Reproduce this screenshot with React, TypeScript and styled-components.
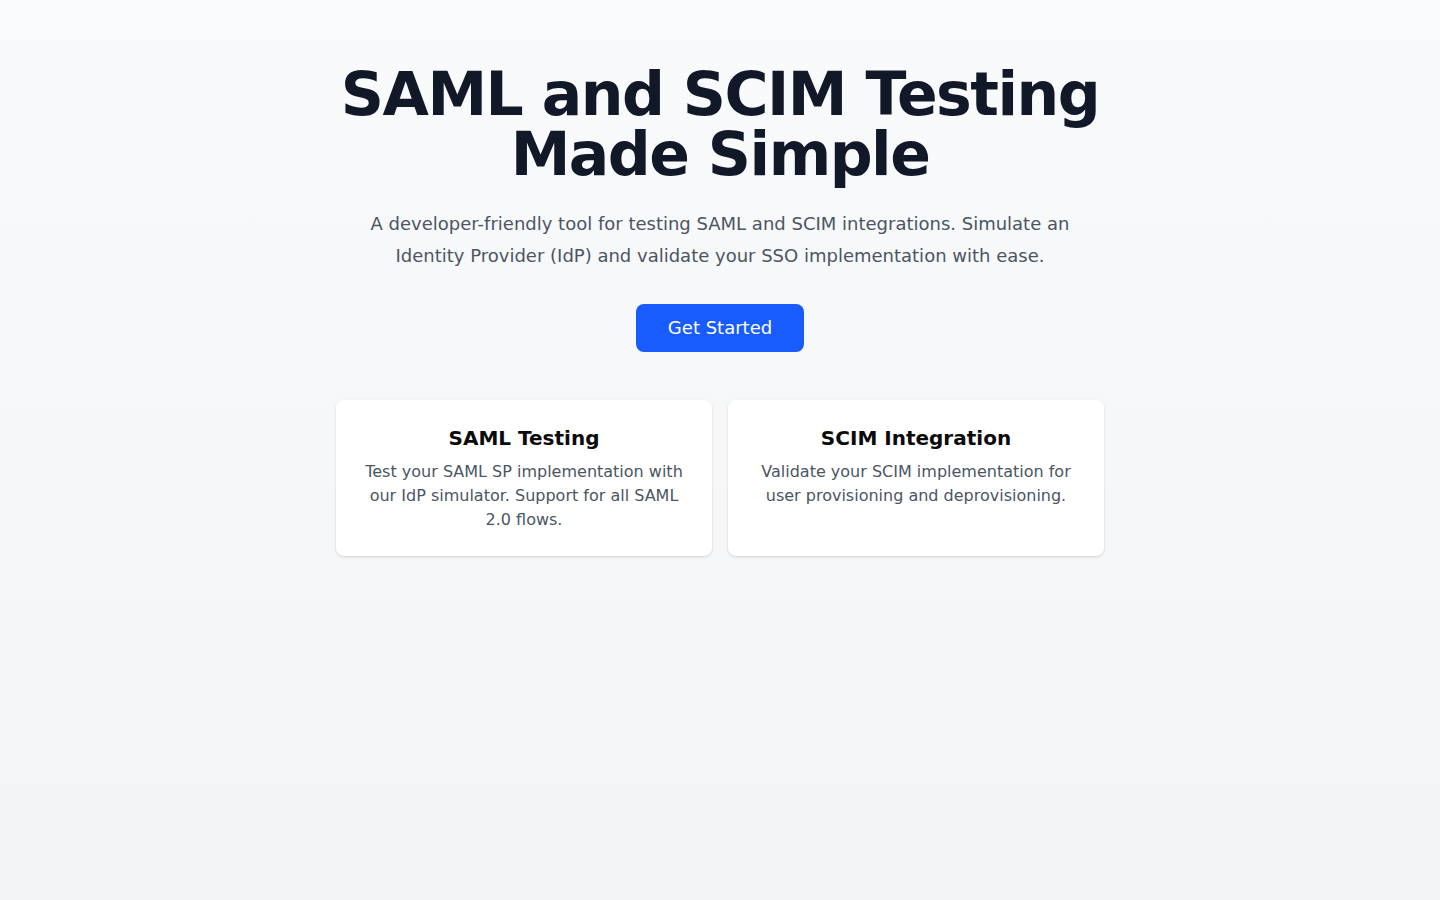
import React from 'react';
import styled, { createGlobalStyle } from 'styled-components';

const GlobalStyle = createGlobalStyle`
  html, body {
    margin: 0;
    padding: 0;
  }
  body {
    font-family: "DejaVu Sans", Verdana, sans-serif;
    -webkit-font-smoothing: antialiased;
  }
  * { box-sizing: border-box; }
`;

const Page = styled.main`
  min-height: 100vh;
  background: linear-gradient(to bottom, #f9fafb, #f3f4f6);
  padding: 64px 16px;
`;

const Container = styled.div`
  max-width: 768px;
  margin: 0 auto;
  display: flex;
  flex-direction: column;
  align-items: center;
  text-align: center;
`;

const Title = styled.h1`
  margin: 0;
  font-size: 60px;
  line-height: 1;
  font-weight: 700;
  letter-spacing: -0.025em;
  color: #111827;
`;

const Lead = styled.p`
  margin: 24px 0 0;
  font-size: 18px;
  line-height: 32px;
  color: #4b5563;
`;

const Actions = styled.div`
  margin-top: 32px;
  display: flex;
  justify-content: center;
`;

const PrimaryButton = styled.button`
  font-family: inherit;
  font-size: 18px;
  line-height: 28px;
  padding: 10px 32px;
  border: none;
  border-radius: 8px;
  background: #185cff;
  color: #ffffff;
  cursor: pointer;
`;

const CardGrid = styled.div`
  margin-top: 48px;
  width: 100%;
  display: grid;
  grid-template-columns: 1fr 1fr;
  gap: 16px;
`;

const Card = styled.div`
  background: #ffffff;
  border-radius: 8px;
  padding: 24px;
  box-shadow: 0 1px 3px rgba(0, 0, 0, 0.1), 0 1px 2px rgba(0, 0, 0, 0.06);
`;

const CardTitle = styled.h3`
  margin: 0 0 8px;
  font-size: 20px;
  line-height: 28px;
  font-weight: 700;
  color: #0b0b0b;
`;

const CardText = styled.p`
  margin: 0;
  font-size: 16px;
  line-height: 24px;
  color: #4b5563;
`;

const features = [
  {
    title: 'SAML Testing',
    text: 'Test your SAML SP implementation with our IdP simulator. Support for all SAML 2.0 flows.',
  },
  {
    title: 'SCIM Integration',
    text: 'Validate your SCIM implementation for user provisioning and deprovisioning.',
  },
];

export default function App() {
  return (
    <>
      <GlobalStyle />
      <Page>
        <Container>
          <Title>
            SAML and SCIM Testing
            <br />
            Made Simple
          </Title>
          <Lead>
            A developer-friendly tool for testing SAML and SCIM integrations. Simulate an Identity
            Provider (IdP) and validate your SSO implementation with ease.
          </Lead>
          <Actions>
            <PrimaryButton>Get Started</PrimaryButton>
          </Actions>
          <CardGrid>
            {features.map(f => (
              <Card key={f.title}>
                <CardTitle>{f.title}</CardTitle>
                <CardText>{f.text}</CardText>
              </Card>
            ))}
          </CardGrid>
        </Container>
      </Page>
    </>
  );
}
